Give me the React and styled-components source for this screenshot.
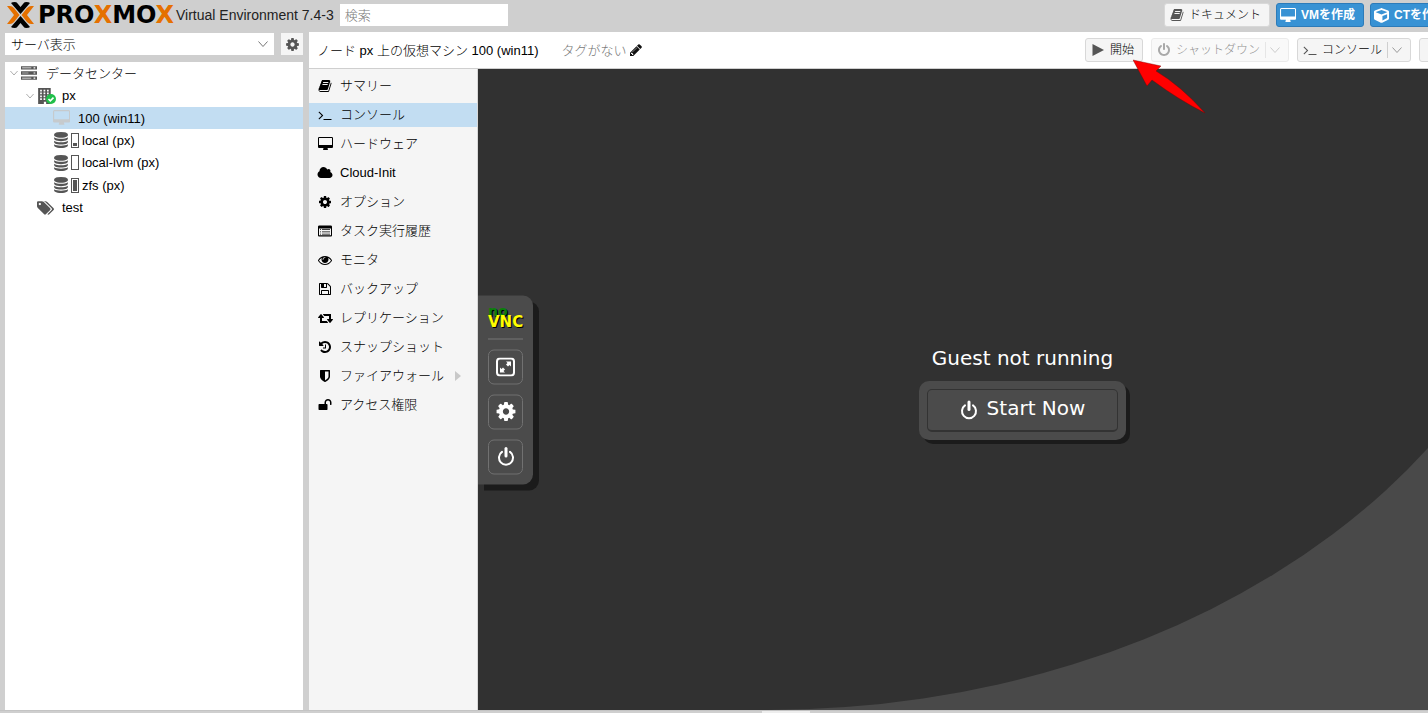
import React from "react";
import styled, { createGlobalStyle, css } from "styled-components";
import { FaCube } from "react-icons/fa";

const GlobalStyle = createGlobalStyle`
  *, *::before, *::after { box-sizing: border-box; }
  html, body { margin: 0; height: 100%; overflow: hidden; }
  body {
    background: #cfcfcf;
    color: #000;
    font: 300 13px/17px "Liberation Sans", "Noto Sans CJK JP", sans-serif;
  }
  button, input, select { font: inherit; color: inherit; margin: 0; }
  h1, p, ul { margin: 0; padding: 0; font: inherit; list-style: none; }
`;

/* ---------- icons ---------- */

const PATHS = {
  desktop: [1920, "M1792 992v-832q0-13-9.5-22.5t-22.5-9.5h-1600q-13 0-22.5 9.5t-9.5 22.5v832q0 13 9.5 22.5t22.5 9.5h1600q13 0 22.5-9.5t9.5-22.5zm128-832v1088q0 66-47 113t-113 47h-544q0 37 16 77.5t32 71 16 43.5q0 26-19 45t-45 19h-512q-26 0-45-19t-19-45q0-14 16-44t32-70 16-78h-544q-66 0-113-47t-47-113v-1088q0-66 47-113t113-47h1600q66 0 113 47t47 113z"],
  cog: [1792, "M1152 896q0-106-75-181t-181-75-181 75-75 181 75 181 181 75 181-75 75-181zm512-109v222q0 12-8 23t-20 13l-185 28q-19 54-39 91 35 50 107 138 10 12 10 25t-9 23q-27 37-99 108t-94 71q-12 0-26-9l-138-108q-44 23-91 38-16 136-29 186-7 28-36 28h-222q-14 0-24.5-8.5t-11.5-21.5l-28-184q-49-16-90-37l-141 107q-10 9-25 9-14 0-25-11-126-114-165-168-7-10-7-23 0-12 8-23 15-21 51-66.5t54-70.5q-27-50-41-99l-183-27q-13-2-21-12.5t-8-23.5v-222q0-12 8-23t19-13l186-28q14-46 39-92-40-57-107-138-10-12-10-24 0-10 9-23 26-36 98.5-107.5t94.5-71.5q13 0 26 10l138 107q44-23 91-38 16-136 29-186 7-28 36-28h222q14 0 24.5 8.5t11.5 21.5l28 184q49 16 90 37l142-107q9-9 24-9 13 0 25 10 129 119 165 170 7 8 7 22 0 12-8 23-15 21-51 66.5t-54 70.5q26 50 41 98l183 28q13 2 21 12.5t8 23.5z"],
  power: [1792, "M1664 896q0 156-61 298t-164 245-245 164-298 61-298-61-245-164-164-245-61-298q0-182 80.5-343t226.5-270q43-32 95.5-25t83.5 50q32 42 24.5 94.5t-49.5 84.5q-98 74-151.5 181t-53.5 228q0 104 40.5 198.5t109.5 163.5 163.5 109.5 198.5 40.5 198.5-40.5 163.5-109.5 109.5-163.5 40.5-198.5q0-121-53.5-228t-151.5-181q-42-32-49.5-84.5t24.5-94.5q31-43 84-50t95 25q146 109 226.5 270t80.5 343zm-640-768v640q0 52-38 90t-90 38-90-38-38-90v-640q0-52 38-90t90-38 90 38 38 90z"],
  terminal: [1792, "M649 983l-466 466q-10 10-23 10t-23-10l-50-50q-10-10-10-23t10-23l393-393-393-393q-10-10-10-23t10-23l50-50q10-10 23-10t23 10l466 466q10 10 10 23t-10 23zm1079 457v64q0 14-9 23t-23 9h-960q-14 0-23-9t-9-23v-64q0-14 9-23t23-9h960q14 0 23 9t9 23z"],
  book: [1792, "M1703 478q40 57 18 129l-275 906q-19 64-76.5 107.5t-122.5 43.5h-923q-77 0-148.5-53.5t-99.5-131.5q-24-67-2-127 0-4 3-27t4-37q1-8-3-21.5t-3-19.5q2-11 8-21t16.5-23.5 16.5-23.5q23-38 45-91.5t30-91.5q3-10 .5-30t-.5-28q3-11 17-28t17-23q21-36 42-92t25-90q1-9-2.5-32t.5-28q4-13 22-30.5t22-22.5q19-26 42.5-84.5t27.5-96.5q1-8-3-25.5t-2-26.5q2-8 9-18t18-23 17-21q8-12 16.5-30.5t15-35 16-36 19.5-32 26.5-23.5 36-11.5 47.5 5.5l-1 3q38-9 51-9h761q74 0 114 56t18 130l-274 906q-36 119-71.5 153.5t-128.5 34.5h-869q-27 0-38 15-11 16-1 43 24 70 144 70h923q29 0 56-15.5t35-41.5l300-987q7-22 5-57 38 15 59 43zm-1064 2q-4 13 2 22.5t20 9.5h608q13 0 25.5-9.5t16.5-22.5l21-64q4-13-2-22.5t-20-9.5h-608q-13 0-25.5 9.5t-16.5 22.5zm-83 256q-4 13 2 22.5t20 9.5h608q13 0 25.5-9.5t16.5-22.5l21-64q4-13-2-22.5t-20-9.5h-608q-13 0-25.5 9.5t-16.5 22.5z"],
  cloud: [2048, "M1984 1152q0 159-112.5 271.5t-271.5 112.5h-1088q-185 0-316.5-131.5t-131.5-316.5q0-132 71-241.5t187-163.5q-2-28-2-43 0-212 150-362t362-150q158 0 286.5 88t187.5 230q70-62 166-62 106 0 181 75t75 181q0 75-41 138 129 30 213 134.5t84 239.5z"],
  tasks: [1792, "M160 192h1472q66 0 113 47t47 113v1088q0 66-47 113t-113 47h-1472q-66 0-113-47t-47-113v-1088q0-66 47-113t113-47zm-32 384v832q0 32 32 32h1472q32 0 32-32v-832zm128 80h128v96h-128zm256 0h1024v96h-1024zm-256 290h128v96h-128zm256 0h1024v96h-1024zm-256 290h128v96h-128zm256 0h1024v96h-1024z"],
  eye: [1792, "M1664 960q-152-236-381-353 61 104 61 225 0 185-131.5 316.5t-316.5 131.5-316.5-131.5-131.5-316.5q0-121 61-225-229 117-381 353 133 205 333.5 326.5t434.5 121.5 434.5-121.5 333.5-326.5zm-720-384q0-20-14-34t-34-14q-125 0-214.5 89.5t-89.5 214.5q0 20 14 34t34 14 34-14 14-34q0-86 61-147t147-61q20 0 34-14t14-34zm848 384q0 34-20 69-140 230-376.5 368.5t-499.5 138.5-499.5-139-376.5-368q-20-35-20-69t20-69q140-229 376.5-368t499.5-139 499.5 139 376.5 368q20 35 20 69z"],
  floppy: [1792, "M512 1536h768v-384h-768v384zm896 0h128v-896q0-14-10-38.5t-20-34.5l-281-281q-10-10-34-20t-39-10v416q0 40-28 68t-68 28h-576q-40 0-68-28t-28-68v-416h-128v1280h128v-416q0-40 28-68t68-28h832q40 0 68 28t28 68v416zm-384-928v-320q0-13-9.5-22.5t-22.5-9.5h-192q-13 0-22.5 9.5t-9.5 22.5v320q0 13 9.5 22.5t22.5 9.5h192q13 0 22.5-9.5t9.5-22.5zm640 32v928q0 40-28 68t-68 28h-1344q-40 0-68-28t-28-68v-1344q0-40 28-68t68-28h928q40 0 88 20t76 48l280 280q28 28 48 76t20 88z"],
  retweet: [1920, "M1280 1504q0 13-9.5 22.5t-22.5 9.5h-960q-8 0-13.5-2t-9-7-5.5-8-3-11.5-1-11.5v-600h-192q-26 0-45-19t-19-45q0-24 15-41l320-384q19-22 49-22t49 22l320 384q15 17 15 41 0 26-19 45t-45 19h-192v384h576q16 0 25 11l160 192q7 10 7 21zm640-416q0 24-15 41l-320 384q-20 23-49 23t-49-23l-320-384q-15-17-15-41 0-26 19-45t45-19h192v-384h-576q-16 0-25-12l-160-192q-7-9-7-20 0-13 9.5-22.5t22.5-9.5h960q8 0 13.5 2t9 7 5.5 8 3 11.5 1 11.5v600h192q26 0 45 19t19 45z"],
  history: [1792, "M1664 896q0 156-61 298t-164 245-245 164-298 61q-172 0-327-72.5t-264-204.5q-7-10-6.5-22.5t8.5-20.5l137-138q10-9 25-9 16 2 23 12 73 95 179 147t225 52q104 0 198.5-40.5t163.5-109.5 109.5-163.5 40.5-198.5-40.5-198.5-109.5-163.5-163.5-109.5-198.5-40.5q-98 0-188 35.5t-160 101.5l137 138q31 30 14 69-17 40-59 40h-448q-26 0-45-19t-19-45v-448q0-42 40-59 39-17 69 14l130 129q107-101 244.5-156.5t284.5-55.5q156 0 298 61t245 164 164 245 61 298zm-640-288v448q0 14-9 23t-23 9h-320q-14 0-23-9t-9-23v-64q0-14 9-23t23-9h224v-352q0-14 9-23t23-9h64q14 0 23 9t9 23z"],
  shield: [1792, "M1344 960v-640h-448v1137q119-63 213-137 235-184 235-360zm192-768v768q0 86-33.5 170.5t-83 150-118 127.5-126.5 103-121 77.5-89.5 49.5-42.5 20q-12 6-26 6t-26-6q-16-7-42.5-20t-89.5-49.5-121-77.5-126.5-103-118-127.5-83-150-33.5-170.5v-768q0-26 19-45t45-19h1152q26 0 45 19t19 45z"],
  unlock: [1792, "M1728 576v256q0 26-19 45t-45 19h-64q-26 0-45-19t-19-45v-256q0-106-75-181t-181-75-181 75-75 181v192h96q40 0 68 28t28 68v576q0 40-28 68t-68 28h-960q-40 0-68-28t-28-68v-576q0-40 28-68t68-28h672v-192q0-185 131.5-316.5t316.5-131.5 316.5 131.5 131.5 316.5z"],
  pencil: [1792, "M491 1536l91-91-235-235-91 91v107h128v128h107zm523-928q0-22-22-22-10 0-17 7l-542 542q-7 7-7 17 0 22 22 22 10 0 17-7l542-542q7-7 7-17zm-54-192l416 416-832 832h-416v-416zm683 96q0 53-37 90l-166 166-416-416 166-165q36-38 90-38 53 0 91 38l235 234q37 39 37 91z"],
  database: [1792, "M896 768q237 0 443-43t325-127v170q0 69-103 128t-280 93.5-385 34.5-385-34.5-280-93.5-103-128v-170q119 84 325 127t443 43zm0 768q237 0 443-43t325-127v170q0 69-103 128t-280 93.5-385 34.5-385-34.5-280-93.5-103-128v-170q119 84 325 127t443 43zm0-384q237 0 443-43t325-127v170q0 69-103 128t-280 93.5-385 34.5-385-34.5-280-93.5-103-128v-170q119 84 325 127t443 43zm0-1152q208 0 385 34.5t280 93.5 103 128v128q0 69-103 128t-280 93.5-385 34.5-385-34.5-280-93.5-103-128v-128q0-69 103-128t280-93.5 385-34.5z"],
  tags: [1920, "M448 448q0-53-37.5-90.5t-90.5-37.5-90.5 37.5-37.5 90.5 37.5 90.5 90.5 37.5 90.5-37.5 37.5-90.5zm1067 576q0 53-37 90l-491 492q-39 37-91 37-53 0-90-37l-715-716q-38-37-64.5-101t-26.5-117v-416q0-52 38-90t90-38h416q53 0 117 26.5t102 64.5l715 714q37 39 37 91zm384 0q0 53-37 90l-491 492q-39 37-91 37-36 0-59-14t-53-45l470-470q37-37 37-90 0-52-37-91l-715-714q-38-38-102-64.5t-117-26.5h224q53 0 117 26.5t102 64.5l715 714q37 39 37 91z"],
  play: [1792, "M192 128l1472 768-1472 768z"],
  server: [1792, "M0 128h1792v384h-1792zm128 160v64h1024v-64zm1280-32v128h192v-128zM0 704h1792v384h-1792zm128 160v64h704v-64zm1280-32v128h192v-128zM0 1280h1792v384h-1792zm128 160v64h1024v-64zm1280-32v128h192v-128z"],
  building: [1792, "M128 0h1408v1792h-512v-256h-256v256h-640zm224 192v192h192v-192zm384 0v192h192v-192zm384 0v192h192v-192zm-768 320v192h192v-192zm384 0v192h192v-192zm384 0v192h192v-192zm-768 320v192h192v-192zm384 0v192h192v-192zm384 0v192h192v-192zm-768 320v192h192v-192zm384 0v192h192v-192zm384 0v192h192v-192z"],
};

function Icon({ name, size = 14, color = "currentColor" }) {
  const [width, d] = PATHS[name];
  return (
    <svg width={(size * width) / 1792} height={size} viewBox={`0 0 ${width} 1792`} aria-hidden="true">
      <path d={d} fill={color} fillRule="evenodd" />
    </svg>
  );
}

function Chevron({ size = 8, color = "#999" }) {
  return (
    <svg width={size} height={size} viewBox="0 0 10 10" fill="none" stroke={color} aria-hidden="true">
      <path d="M0.5 2.5 5 7.5 9.5 2.5" />
    </svg>
  );
}

function PowerOutline() {
  return (
    <svg width="18" height="20" viewBox="0 0 18 20" fill="none" stroke="#fff" strokeLinecap="round" aria-hidden="true">
      <path d="M5 5.4A7 7 0 1 0 13 5.4" strokeWidth="2" />
      <path d="M9 2V9.500" strokeWidth="3" />
    </svg>
  );
}

/* ---------- page frame ---------- */

const Window = styled.div`
  height: 100vh;
  overflow: hidden;
`;

/* The desktop runs past the right edge of the window. */
const Shell = styled.div`
  display: grid;
  grid-template: 32px 1fr 3px / minmax(0, 1fr);
  width: calc(100% + 139px);
  height: 100%;
`;

const Header = styled.header`
  display: flex;
  align-items: center;
  padding: 0 112px 2px 5px;
`;

const Brand = styled.div`
  display: flex;
  align-items: center;
  gap: 3px;
`;

const WordMark = styled.span`
  width: 135px;
  font: 700 24px/26px "DejaVu Sans", sans-serif;
  color: #000;
  white-space: nowrap;
`;

const Accent = styled.span`
  color: #e57000;
`;

const Version = styled.span`
  margin-right: 6px;
  color: #222;
  font-size: 14px;
  white-space: nowrap;
`;

const SearchInput = styled.input`
  width: 168px;
  height: 22px;
  padding: 0 5px;
  border: 0;
  border-radius: 0;
  background: #fff;
  &::placeholder { color: #777; opacity: 1; }
`;

const HeaderActions = styled.div`
  display: flex;
  gap: 6px;
  margin-left: auto;
`;

const Button = styled.button`
  display: flex;
  align-items: center;
  gap: 5px;
  height: 24px;
  padding: 0 8px 0 5px;
  border: 1px solid #d8d8d8;
  border-radius: 3px;
  background: #f5f5f5;
  font-size: 12px;
  white-space: nowrap;
  svg { flex: none; color: #555; }
  ${(p) => p.$primary && css`
    border-color: #2c7bb9;
    background: #3892d4;
    color: #fff;
    font-weight: 700;
    padding-left: 3px;
    svg { color: #fff; }
  `}
  &:disabled { opacity: 0.5; color: #222; }
`;

const Body = styled.div`
  display: grid;
  grid-template-columns: 298px minmax(0, 1fr);
  gap: 6px;
  min-height: 0;
  padding-left: 5px;
`;

/* ---------- resource tree ---------- */

const Sidebar = styled.nav`
  display: flex;
  flex-direction: column;
  gap: 7px;
  padding-top: 1px;
`;

const ViewBar = styled.div`
  display: flex;
  gap: 7px;
`;

const SelectBox = styled.div`
  position: relative;
  flex: 1;
  display: flex;
  svg { position: absolute; right: 6px; top: 6px; pointer-events: none; }
`;

const ViewSelect = styled.select`
  appearance: none;
  width: 100%;
  height: 22px;
  padding: 0 6px;
  border: 0;
  border-radius: 0;
  background: #fff;
`;

const SettingsButton = styled.button`
  display: grid;
  place-items: center;
  width: 22px;
  height: 22px;
  padding: 0;
  border: 0;
  background: #f5f5f5;
  color: #555;
`;

const TreePanel = styled.div`
  flex: 1;
  background: #fff;
`;

const Tree = styled.ul`
  display: grid;
  grid-auto-rows: 1fr;
  height: 157px;
`;

const TreeRow = styled.li`
  display: flex;
  align-items: center;
  padding-left: ${(p) => 5 + p.$level * 16}px;
  background: ${(p) => (p.$selected ? "#c2ddf2" : "none")};
  white-space: nowrap;
`;

const Toggle = styled.span`
  display: flex;
  width: 8px;
  margin-right: 3px;
`;

const TreeIcon = styled.span`
  position: relative;
  display: flex;
  width: 16px;
  color: #555;
  svg { flex: none; }
`;

const OnlineBadge = styled.svg`
  position: absolute;
  left: 9px;
  top: 6px;
`;

const TreeLabel = styled.span`
  margin-left: ${(p) => (p.$tight ? 3 : 9)}px;
`;

const Usage = styled.span`
  display: flex;
  align-items: flex-end;
  width: 8px;
  height: 15px;
  margin-left: 2px;
  padding: 1px;
  border: 1px solid #555;
  &::after {
    content: "";
    width: 100%;
    height: ${(p) => p.$level}%;
    background: #555;
  }
`;

const TREE = [
  { level: 0, icon: "server", label: "データセンター", open: true },
  { level: 1, icon: "building", label: "px", open: true, online: true },
  { level: 2, icon: "desktop", label: "100 (win11)", selected: true, dim: true },
  { level: 2, icon: "database", label: "local (px)", usage: 25 },
  { level: 2, icon: "database", label: "local-lvm (px)", usage: 0 },
  { level: 2, icon: "database", label: "zfs (px)", usage: 100 },
  { level: 1, icon: "tags", label: "test" },
];

/* ---------- content ---------- */

const Content = styled.main`
  display: grid;
  grid-template: 37px minmax(0, 1fr) / 169px minmax(0, 1fr);
  min-width: 0;
  background: #fff;
`;

const Toolbar = styled.div`
  grid-column: 1 / -1;
  display: flex;
  align-items: center;
  padding: 0 48px 0 8px;
  border-bottom: 1px solid #cfcfcf;
`;

const Title = styled.h1`
  white-space: nowrap;
`;

const NoTags = styled.span`
  display: flex;
  align-items: center;
  gap: 2px;
  margin-left: 23px;
  color: #777;
  svg { color: #111; }
`;

const ToolbarActions = styled.div`
  display: flex;
  gap: 8px;
  margin-left: auto;
`;

const Pointed = styled.div`
  position: relative;
`;

const Arrow = styled.svg`
  position: absolute;
  z-index: 2;
  left: 48px;
  top: 21px;
  pointer-events: none;
`;

const SplitMark = styled.span`
  display: flex;
  align-items: center;
  height: 16px;
  padding-left: 4px;
  border-left: 1px solid #cfcfcf;
`;

const MoreButton = styled(Button)`
  width: 100px;
`;

const Menu = styled.ul`
  display: flex;
  flex-direction: column;
  gap: 5px;
  padding-top: 5px;
  border-right: 1px solid #d8d8d8;
  background: #f5f5f5;
`;

const MenuLink = styled.a`
  display: flex;
  align-items: center;
  gap: 7px;
  height: 24px;
  padding: 0 0 1px 8px;
  background: ${(p) => (p.$active ? "#c2ddf2" : "none")};
  color: inherit;
  text-decoration: none;
  white-space: nowrap;
`;

const MenuIcon = styled.span`
  display: flex;
  justify-content: center;
  width: 16px;
  color: #000;
`;

const MENU = [
  ["book", "サマリー"],
  ["terminal", "コンソール"],
  ["desktop", "ハードウェア"],
  ["cloud", "Cloud-Init"],
  ["cog", "オプション"],
  ["tasks", "タスク実行履歴"],
  ["eye", "モニタ"],
  ["floppy", "バックアップ"],
  ["retweet", "レプリケーション"],
  ["history", "スナップショット"],
  ["shield", "ファイアウォール"],
  ["unlock", "アクセス権限"],
];

/* ---------- console ---------- */

const Console = styled.section`
  position: relative;
  background: #494949;
`;

const Screen = styled.div`
  display: flex;
  flex-direction: column;
  align-items: center;
  justify-content: center;
  gap: 9px;
  height: 100%;
  padding-top: 4px;
  border-bottom-right-radius: 800px 600px;
  background: #313131;
  color: #fff;
  font: 400 20px/28px "DejaVu Sans", sans-serif;
`;

const StartFrame = styled.div`
  padding: 8px;
  border-radius: 10px;
  background: #4b4b4b;
  box-shadow: 4px 4px 0 #1b1b1b;
`;

const StartButton = styled.button`
  display: flex;
  align-items: center;
  justify-content: center;
  gap: 9px;
  width: 191px;
  height: 43px;
  padding: 0 0 3px;
  border: 1px solid #333;
  border-bottom-width: 2px;
  border-radius: 5px;
  background: none;
  svg { margin-top: 3px; }
`;

const ControlBar = styled.aside`
  position: absolute;
  left: 0;
  top: 50%;
  transform: translateY(-50%);
  display: flex;
  flex-direction: column;
  gap: 10px;
  width: 55px;
  padding: 10px;
  border-radius: 0 10px 10px 0;
  background: #4b4b4b;
  box-shadow: 6px 6px 0 #1b1b1b;
`;

const VncLogo = styled.div`
  height: 34px;
  border-bottom: 1px solid #777;
  font: 700 15px/12px "DejaVu Sans", sans-serif;
  color: #ff0;
  text-shadow: 1px 1px 0 #000;
`;

const VncTop = styled.div`
  color: #0b7f0b;
  font-size: 14px;
  line-height: 10px;
`;

const ControlButton = styled.button`
  display: grid;
  place-items: center;
  width: 35px;
  height: 35px;
  padding: 0;
  border: 1px solid #717171;
  border-radius: 6px;
  background: none;
  color: #fff;
`;

const Footer = styled.footer`
  display: flex;
  justify-content: center;
  padding-left: 5px;
  border-top: 1px solid #c4c4c4;
`;

const LogHandle = styled.div`
  width: 48px;
  background: #eee;
`;

export default function App() {
  return (
    <Window>
      <GlobalStyle />
      <Shell>
        <Header>
          <Brand>
            <svg width="30" height="26" viewBox="0 0 30 26" aria-hidden="true">
              <path fill="#000" d="M6 1Q7 0 10 0Q12 0 13 2L15.500 5 18 2Q19 0 21 0Q24 0 25 1L15.500 12ZM6 25Q7 26 10 26Q12 26 13 24L15.500 21 18 24Q19 26 21 26Q24 26 25 25L15.500 14Z" />
              <path fill="#e57000" d="M2 4H5Q7 4 9 6L14.500 13 9 20Q7 22 5 22H2L9 13ZM29 4H26Q24 4 22 6L16.500 13 22 20Q24 22 26 22H29L22 13Z" />
            </svg>
            <WordMark>PRO<Accent>X</Accent>MO<Accent>X</Accent></WordMark>
            <Version>Virtual Environment 7.4-3</Version>
          </Brand>
          <SearchInput type="search" placeholder="検索" aria-label="検索" />
          <HeaderActions>
            <Button type="button"><Icon name="book" />ドキュメント</Button>
            <Button type="button" $primary><Icon name="desktop" size={15} />VMを作成</Button>
            <Button type="button" $primary><FaCube size={15} />CTを作成</Button>
          </HeaderActions>
        </Header>

        <Body>
          <Sidebar>
            <ViewBar>
              <SelectBox>
                <ViewSelect aria-label="表示"><option>サーバ表示</option></ViewSelect>
                <Chevron size={10} color="#777" />
              </SelectBox>
              <SettingsButton type="button" aria-label="設定"><Icon name="cog" size={15} /></SettingsButton>
            </ViewBar>
            <TreePanel>
              <Tree>
                {TREE.map((n) => (
                  <TreeRow key={n.label} $level={n.level} $selected={n.selected}>
                    <Toggle>{n.open && <Chevron />}</Toggle>
                    <TreeIcon>
                      <Icon name={n.icon} size={16} color={n.dim ? "#c6cacd" : undefined} />
                      {n.online && (
                        <OnlineBadge width="10" height="10" viewBox="0 0 10 10">
                          <circle cx="5" cy="5" r="5" fill="#21bf4b" />
                          <path d="M2.5 5 4.3 6.8 7.5 3.6" fill="none" stroke="#fff" strokeWidth="1.6" />
                        </OnlineBadge>
                      )}
                    </TreeIcon>
                    {n.usage !== undefined && <Usage $level={n.usage} />}
                    <TreeLabel $tight={n.usage !== undefined}>{n.label}</TreeLabel>
                  </TreeRow>
                ))}
              </Tree>
            </TreePanel>
          </Sidebar>

          <Content>
            <Toolbar>
              <Title>ノード px 上の仮想マシン 100 (win11)</Title>
              <NoTags>タグがない<Icon name="pencil" size={14} /></NoTags>
              <ToolbarActions>
                <Pointed>
                  <Button type="button"><Icon name="play" />開始</Button>
                  <Arrow width="74" height="56" viewBox="0 0 74 56" aria-hidden="true">
                    <path d="M0 1 28 7 23 12Q48 27 72 54Q46 41 19 21L14 27Z" fill="#f00" stroke="#7a0000" strokeOpacity="0.4" />
                  </Arrow>
                </Pointed>
                <Button type="button" disabled>
                  <Icon name="power" />シャットダウン<SplitMark><Chevron size={10} /></SplitMark>
                </Button>
                <Button type="button">
                  <Icon name="terminal" />コンソール<SplitMark><Chevron size={10} /></SplitMark>
                </Button>
                <MoreButton type="button" aria-label="その他" />
              </ToolbarActions>
            </Toolbar>

            <Menu>
              {MENU.map(([icon, label]) => (
                <li key={label}>
                  <MenuLink href="#" $active={icon === "terminal"}>
                    <MenuIcon><Icon name={icon} size={14} /></MenuIcon>
                    {label}
                    {icon === "shield" && (
                      <svg width="12" height="10" viewBox="0 0 12 10" aria-hidden="true">
                        <path d="M4 0 10 5 4 10Z" fill="#c8c8c8" />
                      </svg>
                    )}
                  </MenuLink>
                </li>
              ))}
            </Menu>

            <Console>
              <Screen>
                <p>Guest not running</p>
                <StartFrame>
                  <StartButton type="button"><PowerOutline />Start Now</StartButton>
                </StartFrame>
              </Screen>
              <ControlBar>
                <VncLogo><VncTop>no</VncTop>VNC</VncLogo>
                <ControlButton type="button" aria-label="Fullscreen">
                  <svg width="19" height="19" viewBox="0 0 19 19" aria-hidden="true">
                    <rect x="1" y="1" width="17" height="17" rx="3" fill="none" stroke="#fff" strokeWidth="2" />
                    <path fill="#fff" d="M10 4h5v5l-1.500-1.500-1.500 1.500-2-2 1.500-1.500zM9 15H4v-5l1.500 1.500 1.500-1.500 2 2-1.500 1.500z" />
                  </svg>
                </ControlButton>
                <ControlButton type="button" aria-label="Settings"><Icon name="cog" size={22} /></ControlButton>
                <ControlButton type="button" aria-label="Power"><PowerOutline /></ControlButton>
              </ControlBar>
            </Console>
          </Content>
        </Body>

        <Footer><LogHandle /></Footer>
      </Shell>
    </Window>
  );
}
